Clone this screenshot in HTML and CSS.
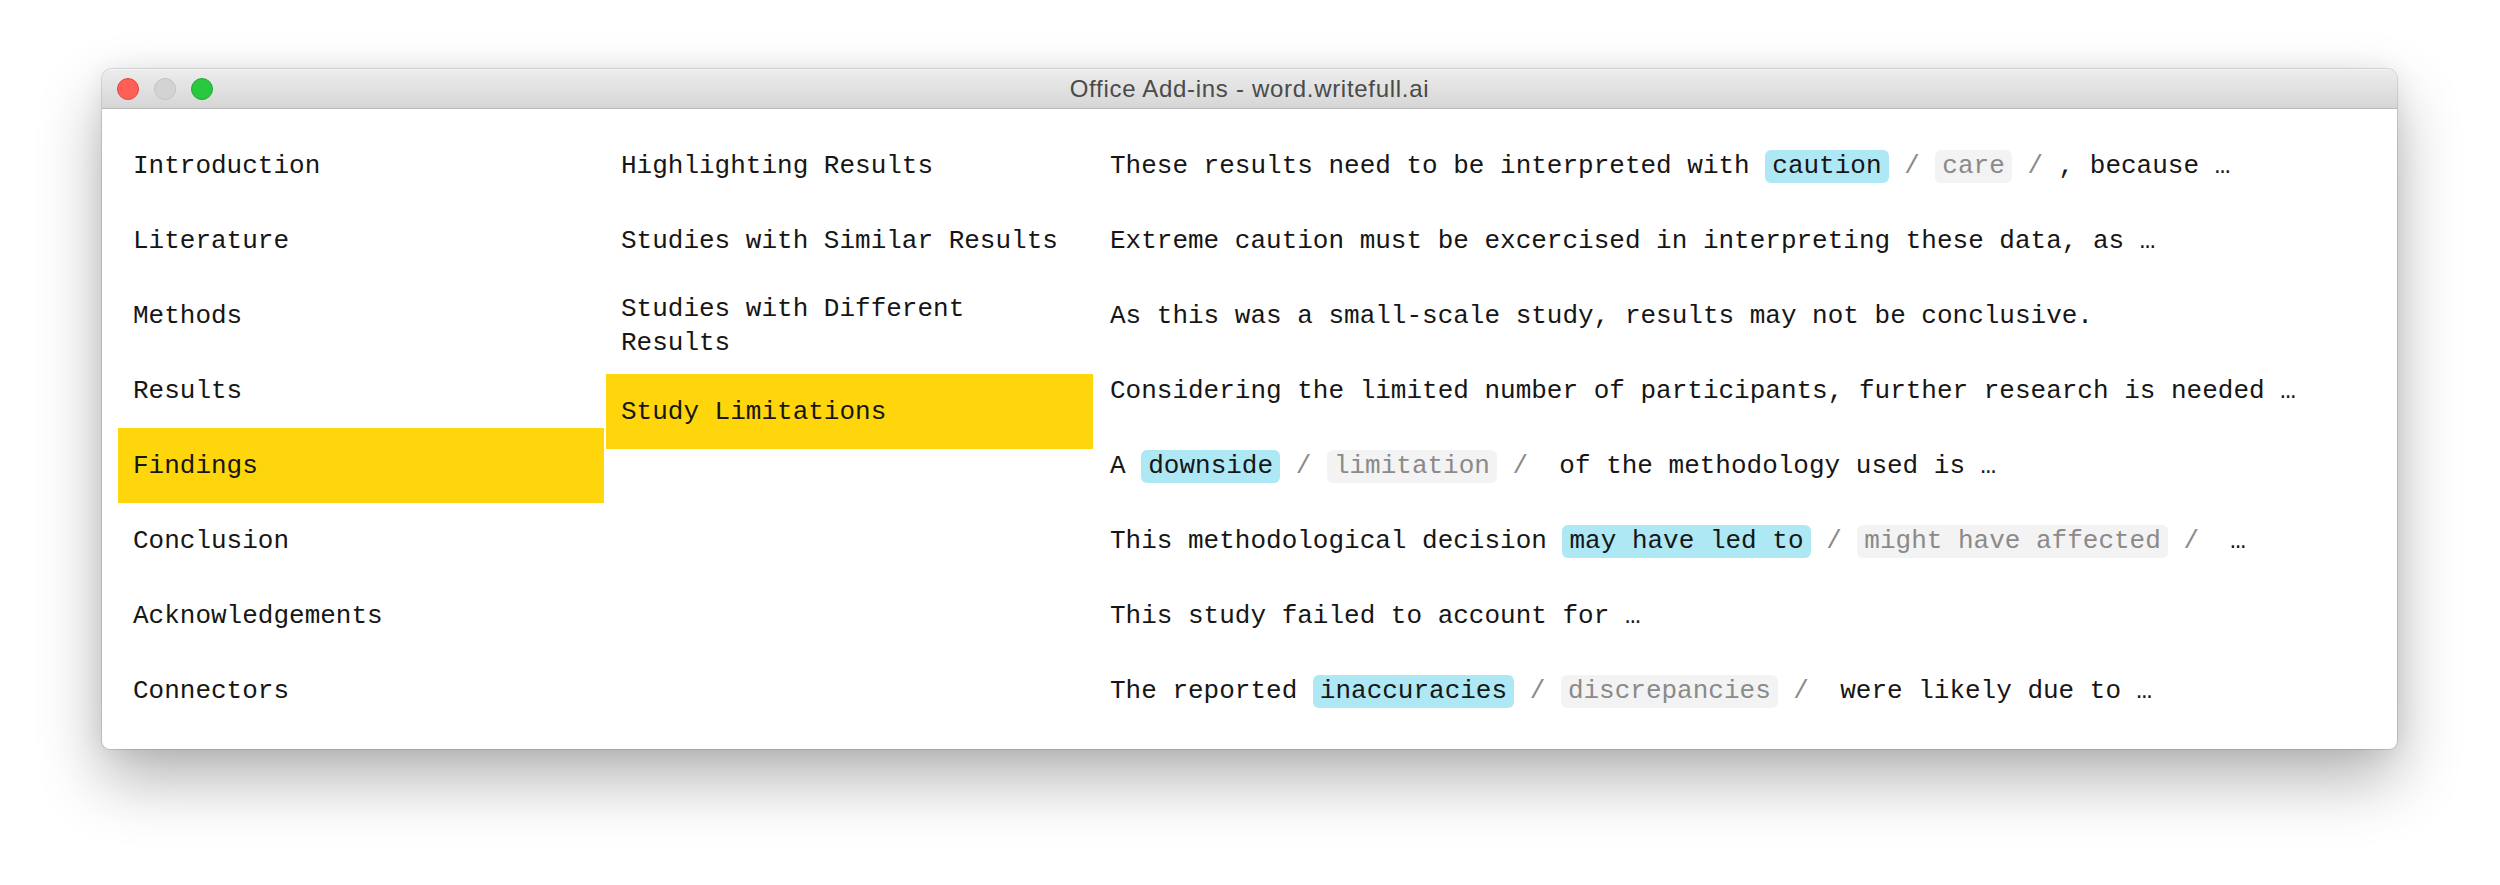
FILE: index.html
```html
<!DOCTYPE html>
<html lang="en">
<head>
<meta charset="utf-8">
<title>Office Add-ins - word.writefull.ai</title>
<link rel="stylesheet" href="styles.css">
</head>
<body>
<div class="window">
  <div class="titlebar">
    <div class="lights">
      <span class="light red"></span>
      <span class="light idle"></span>
      <span class="light green"></span>
    </div>
    <div class="title">Office Add-ins - word.writefull.ai</div>
    <div></div>
  </div>
  <div class="content">
    <ul class="col">
      <li class="item">Introduction</li>
      <li class="item">Literature</li>
      <li class="item">Methods</li>
      <li class="item">Results</li>
      <li class="item active">Findings</li>
      <li class="item">Conclusion</li>
      <li class="item">Acknowledgements</li>
      <li class="item">Connectors</li>
    </ul>
    <ul class="col">
      <li class="item">Highlighting Results</li>
      <li class="item">Studies with Similar Results</li>
      <li class="item">Studies with Different Results</li>
      <li class="item active">Study Limitations</li>
    </ul>
    <ul class="col phrases">
      <li class="item"><span class="line">These results need to be interpreted with <span class="chip">caution</span> <span class="sep">/</span> <span class="chip alt">care</span> <span class="sep">/</span> , because …</span></li>
      <li class="item"><span class="line">Extreme caution must be excercised in interpreting these data, as …</span></li>
      <li class="item"><span class="line">As this was a small-scale study, results may not be conclusive.</span></li>
      <li class="item"><span class="line">Considering the limited number of participants, further research is needed …</span></li>
      <li class="item"><span class="line">A <span class="chip">downside</span> <span class="sep">/</span> <span class="chip alt">limitation</span> <span class="sep">/</span>  of the methodology used is …</span></li>
      <li class="item"><span class="line">This methodological decision <span class="chip">may have led to</span> <span class="sep">/</span> <span class="chip alt">might have affected</span> <span class="sep">/</span>  …</span></li>
      <li class="item"><span class="line">This study failed to account for …</span></li>
      <li class="item"><span class="line">The reported <span class="chip">inaccuracies</span> <span class="sep">/</span> <span class="chip alt">discrepancies</span> <span class="sep">/</span>  were likely due to …</span></li>
    </ul>
  </div>
</div>
</body>
</html>
```

FILE: styles.css
```css
* {
  box-sizing: border-box;
}

html, body {
  margin: 0;
  padding: 0;
  background: #ffffff;
}

body {
  width: 2500px;
  height: 885px;
  overflow: hidden;
  padding: 69px 0 0 102px;
}

.window {
  width: 2295px;
  height: 680px;
  border-radius: 10px 10px 8px 8px;
  overflow: hidden;
  background: #ffffff;
  box-shadow: 0 0 0 1px rgba(0, 0, 0, 0.12), 0 30px 64px rgba(0, 0, 0, 0.3), 0 0 24px rgba(0, 0, 0, 0.07);
}

.titlebar {
  height: 40px;
  display: grid;
  grid-template-columns: 1fr auto 1fr;
  align-items: center;
  background: linear-gradient(#ececec, #d6d6d6);
  border-top: 1px solid #f6f6f6;
  border-bottom: 1px solid #b9b9b9;
}

.lights {
  display: flex;
  gap: 15px;
  padding-left: 15px;
}

.light {
  width: 22px;
  height: 22px;
  border-radius: 50%;
  display: block;
}

.light.red {
  background: #ff5f57;
  border: 1px solid #e2463f;
}

.light.idle {
  background: #d3d3d3;
  border: 1px solid #c2c2c2;
}

.light.green {
  background: #28c840;
  border: 1px solid #1eaa2f;
}

.title {
  font-family: "Liberation Sans", Arial, sans-serif;
  font-size: 24px;
  letter-spacing: 0.7px;
  color: #4a4a4a;
  white-space: nowrap;
}

.content {
  display: grid;
  grid-template-columns: 486px 487px 1fr;
  column-gap: 2px;
  padding: 19px 16px 21px 16px;
  font-family: "Liberation Mono", "DejaVu Sans Mono", monospace;
  font-size: 26px;
  color: #161616;
}

.col {
  list-style: none;
  margin: 0;
  padding: 0;
  display: flex;
  flex-direction: column;
}

.item {
  min-height: 75px;
  padding: 14px 15px;
  line-height: 34px;
  display: flex;
  align-items: center;
}

.item.active {
  background: #ffd60c;
}

.line {
  white-space: pre;
}

.chip {
  display: inline-block;
  line-height: 33px;
  padding: 0 7px;
  border-radius: 6px;
  background: #aee8f4;
  color: #161616;
}

.chip.alt {
  background: #f3f3f3;
  color: #8a8a8a;
}

.sep {
  color: #8a8a8a;
}
```
